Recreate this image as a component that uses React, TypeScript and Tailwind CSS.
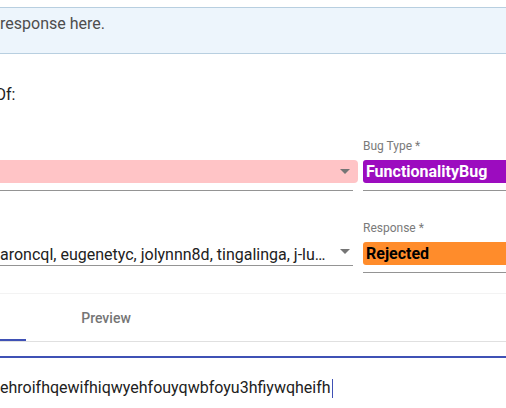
import React from "react";

function DropArrow({ className = "" }: { className?: string }) {
  return (
    <svg width="10" height="5" viewBox="0 0 10 5" className={className}>
      <path d="M0 0 L10 0 L5 5 Z" fill="#757575" />
    </svg>
  );
}

export default function App() {
  return (
    <div className="w-[506px] h-[408px] overflow-hidden bg-white font-['Roboto',sans-serif] text-[#212121]">
      {/* info box */}
      <div className="mt-[7px] h-[47px] border-y border-[#b8cfe0] bg-[#edf5fc] pt-[4px] text-base leading-6 text-[#4d4d4d] whitespace-nowrap">
        response here.
      </div>

      <div className="mt-[29px] h-[24px] text-base leading-6 whitespace-nowrap -ml-[5px]">Of:</div>

      {/* row 1 */}
      <div className="mt-[31px] flex gap-[10px]">
        <div className="w-[353px] shrink-0">
          <div className="h-[22px]" />
          <div className="h-[23px] w-[358px] rounded-r-[4px] bg-[#ffc4c6] flex items-center justify-end pr-[8px]">
            <DropArrow />
          </div>
          <div className="h-[8px] border-b border-[#949494]" />
        </div>
        <div className="flex-1 min-w-0">
          <div className="h-[16px] text-xs leading-4 text-[#7a7a7a] whitespace-nowrap">Bug Type *</div>
          <div className="mt-[6px] h-[23px] rounded-l-[3px] bg-[#9c0cbf] px-[3px] text-base font-bold leading-[23px] text-white whitespace-nowrap">
            FunctionalityBug
          </div>
          <div className="h-[8px] border-b border-[#949494]" />
        </div>
      </div>

      {/* row 2 */}
      <div className="mt-[29px] flex gap-[10px]">
        <div className="w-[353px] shrink-0">
          <div className="h-[25px]" />
          <div className="h-[21px] border-b border-[#949494] flex justify-between pr-[3px]">
            <span className="text-base leading-5 whitespace-nowrap">aroncql, eugenetyc, jolynnn8d, tingalinga, j-lu…</span>
            <DropArrow className="mt-[4px] shrink-0" />
          </div>
        </div>
        <div className="flex-1 min-w-0">
          <div className="h-[16px] text-xs leading-4 text-[#7a7a7a] whitespace-nowrap">Response *</div>
          <div className="mt-[6px] h-[23px] rounded-l-[3px] bg-[#ff8c2b] px-[3px] text-base font-bold leading-[23px] text-black whitespace-nowrap">
            Rejected
          </div>
          <div className="h-[8px] border-b border-[#949494]" />
        </div>
      </div>

      <div className="mt-[20px] h-px bg-[#f3f3f3]" />

      {/* tabs */}
      <div className="flex h-[48px] border-b border-[#e0e0e0]">
        <div className="w-[26px] flex flex-col justify-end">
          <div className="h-[2px] bg-[#3f51b5]" />
        </div>
        <div className="w-[160px] flex items-center justify-center text-sm font-medium text-[#757575]">Preview</div>
      </div>

      <div className="mt-[14px] h-[2px] bg-[#3f51b5]" />

      <div className="mt-[18px] flex items-center h-[24px] text-base leading-6 whitespace-nowrap">
        <span>ehroifhqewifhiqwyehfouyqwbfoyu3hfiywqheifh</span>
        <span className="ml-px h-[19px] w-px bg-[#3f51b5]" />
      </div>
    </div>
  );
}
